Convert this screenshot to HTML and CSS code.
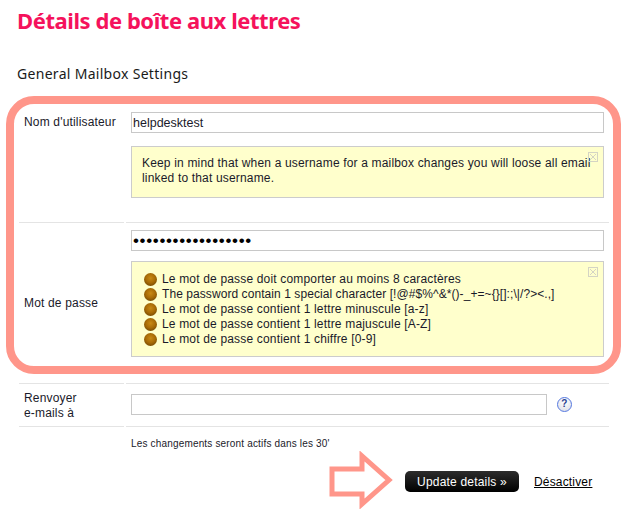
FILE: index.html
```html
<!DOCTYPE html>
<html lang="fr">
<head>
  <meta charset="UTF-8">
  <title>Détails de boîte aux lettres</title>
  <link rel="stylesheet" href="styles.css">
</head>
<body>
  <div class="page">
    <h1 class="title">Détails de boîte aux lettres</h1>
    <h2 class="section-title">General Mailbox Settings</h2>

    <form class="settings">
      <div class="row row-user">
        <label class="label label-top">Nom d'utilisateur</label>
        <div class="value">
          <input class="field" type="text" value="helpdesktest">
          <div class="note note-user">
            <span class="note-close"><svg width="10" height="10" viewBox="0 0 10 10"><rect x="0.5" y="0.5" width="9" height="9" fill="none" stroke="#d4d4c4"/><path d="M2 2l6 6M8 2l-6 6" stroke="#d4d4c4" fill="none"/></svg></span>
            Keep in mind that when a username for a mailbox changes you will loose all email linked to that username.
          </div>
        </div>
      </div>

      <div class="row row-pass">
        <label class="label">Mot de passe</label>
        <div class="value">
          <input class="field field-pass" type="password" value="helpdesktest123456">
          <div class="note note-pass">
            <span class="note-close"><svg width="10" height="10" viewBox="0 0 10 10"><rect x="0.5" y="0.5" width="9" height="9" fill="none" stroke="#d4d4c4"/><path d="M2 2l6 6M8 2l-6 6" stroke="#d4d4c4" fill="none"/></svg></span>
            <ul class="rules">
              <li>Le mot de passe doit comporter au moins 8 caractères</li>
              <li class="rule-special">The password contain 1 special character [!@#$%^&amp;*()-_+=~{}[]:;\|/?&gt;&lt;.,]</li>
              <li>Le mot de passe contient 1 lettre minuscule [a-z]</li>
              <li>Le mot de passe contient 1 lettre majuscule [A-Z]</li>
              <li>Le mot de passe contient 1 chiffre [0-9]</li>
            </ul>
          </div>
        </div>
      </div>

      <div class="row row-forward">
        <label class="label label-forward">Renvoyer<br>e-mails à</label>
        <div class="value value-forward">
          <input class="field field-forward" type="text">
          <span class="help">?</span>
        </div>
      </div>

      <p class="hint">Les changements seront actifs dans les 30'</p>

      <div class="actions">
        <button class="btn" type="button">Update details »</button>
        <a class="link" href="#">Désactiver</a>
      </div>
    </form>
  </div>

  <div class="highlight"></div>
  <svg class="arrow" width="66" height="58" viewBox="0 0 66 58">
    <path d="M3 18H33V5L60 29L33 53V43H3Z" fill="#fff" stroke="#ff968a" stroke-width="5"/>
  </svg>
</body>
</html>
```

FILE: styles.css
```css
body {
  margin: 0;
  background-color: #ffffff;
  font-family: "Liberation Sans", Arial, sans-serif;
  font-size: 12px;
  letter-spacing: 0.17px;
  color: #1a1a2a;
}
.page {
  padding: 7px 35px 0 17px;
  height: 502px;
}
.title {
  margin: 0;
  font-family: "Noto Sans", sans-serif;
  font-size: 22px;
  line-height: 26px;
  font-weight: 700;
  letter-spacing: -0.43px;
  color: #f5125c;
}
.section-title {
  margin: 31px 0 0;
  font-family: "Noto Sans", sans-serif;
  font-size: 14px;
  line-height: 20px;
  font-weight: 400;
  letter-spacing: 0.3px;
  color: #1a1a1a;
}
.settings {
  margin: 23px 0 0 2px;
}
.row {
  display: grid;
  grid-template-columns: 105px 483px;
  column-gap: 2px;
}
.row-user {
  height: 116px;
}
.row-pass {
  height: 161px;
}
.row-forward {
  height: 43px;
}
.label {
  display: flex;
  align-items: center;
  padding-left: 5px;
  line-height: 15px;
  border-bottom: 1px solid #e4e4e4;
}
.label-top {
  align-items: flex-start;
  padding-top: 8px;
}
.label-forward {
  padding-top: 2px;
}
.value {
  padding: 4px 5px 0;
  border-bottom: 1px solid #e4e4e4;
}
.row-user .value {
  padding-top: 5px;
}
.row-pass .value {
  padding-top: 7px;
}
.value-forward {
  display: flex;
  align-items: flex-start;
  padding-top: 10px;
}
.field {
  display: block;
  box-sizing: border-box;
  width: 473px;
  height: 21px;
  padding: 0 1px;
  border: 1px solid #c8c8c8;
  background-color: #ffffff;
  font-family: "Liberation Sans", Arial, sans-serif;
  font-size: 12.5px;
  color: #1a1a2a;
  outline: none;
}
.field-forward {
  width: 416px;
}
.field-pass {
  font-size: 17px;
  letter-spacing: 0.65px;
  color: #000000;
}
.note {
  position: relative;
  box-sizing: border-box;
  margin-top: 10px;
  padding: 10px 10px 0;
  background-color: #ffffcc;
  border: 1px solid #cccccc;
  line-height: 15px;
}
.note-user {
  height: 52px;
  margin-top: 13px;
  padding-top: 9px;
}
.note-pass {
  height: 96px;
  padding: 10px 10px 0 12px;
}
.note-close {
  position: absolute;
  top: 5px;
  right: 5px;
  width: 10px;
  height: 10px;
}
.note-close svg {
  display: block;
}
.rules {
  margin: 0;
  padding: 0;
  list-style: none;
}
.rules li {
  display: flex;
  align-items: center;
  height: 15px;
  white-space: nowrap;
}
.rules .rule-special {
  letter-spacing: 0.07px;
}
.rules li::before {
  content: "";
  flex: none;
  width: 13px;
  height: 13px;
  margin-right: 5px;
  border-radius: 50%;
  background: radial-gradient(circle at 50% 40%, #c98a14 0, #a96c06 45%, #5c3a00 100%);
}
.help {
  display: block;
  box-sizing: border-box;
  width: 15px;
  height: 15px;
  margin: 3px 0 0 10px;
  border: 1.5px solid #5578e0;
  border-radius: 50%;
  background: radial-gradient(circle at 50% 30%, #ffffff 0, #d8dbe4 100%);
  color: #2a3f90;
  font-size: 10px;
  font-weight: 700;
  line-height: 12px;
  text-align: center;
}
.hint {
  margin: 10px 0 0 112px;
  font-size: 10px;
  line-height: 14px;
}
.actions {
  display: flex;
  align-items: center;
  margin: 20px 0 0 386px;
}
.btn {
  width: 114px;
  height: 21px;
  padding: 0;
  border: none;
  border-radius: 5px;
  background: linear-gradient(#2c2c2c, #000000);
  color: #ffffff;
  font-family: "Liberation Sans", Arial, sans-serif;
  font-size: 12px;
  letter-spacing: 0.2px;
}
.link {
  margin-left: 15px;
  color: #000000;
  font-size: 12px;
}
.highlight {
  position: absolute;
  left: 6px;
  top: 96px;
  width: 599px;
  height: 262px;
  border: 8px solid #ff968a;
  border-radius: 28px;
}
.arrow {
  position: absolute;
  left: 329px;
  top: 451px;
}
```
